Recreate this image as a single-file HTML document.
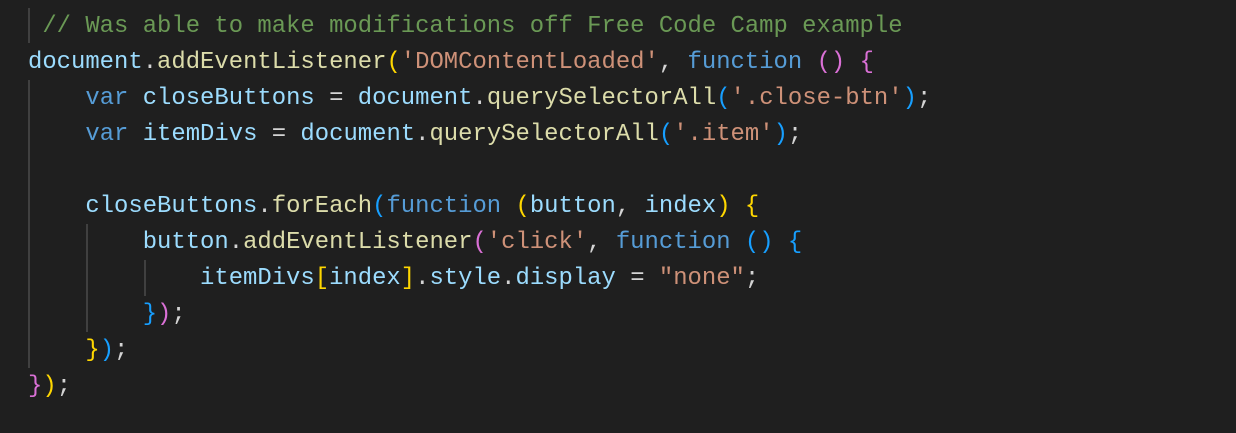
<!DOCTYPE html>
<html><head><style>
html,body{margin:0;padding:0;background:#1f1f1f;width:1236px;height:433px;overflow:hidden}
.c{position:absolute;left:28px;top:9px;font-family:"Liberation Mono",monospace;font-size:23.9px;line-height:36px;color:#9cdcfe;white-space:pre}
.g{position:absolute;width:2px;background:#404040}
.cm{color:#6a9955}.f{color:#dcdcaa}.k{color:#569cd6}.s{color:#ce9178}.p{color:#d4d4d4}
.y{color:#ffd700}.m{color:#da70d6}.b{color:#179fff}
</style></head><body>
<div class="g" style="left:28px;top:8px;height:35px"></div>
<div class="g" style="left:28px;top:80px;height:288px"></div>
<div class="g" style="left:86px;top:224px;height:108px"></div>
<div class="g" style="left:144px;top:260px;height:36px"></div>
<div class="c"><span class="cm"> // Was able to make modifications off Free Code Camp example</span>
document<span class="p">.</span><span class="f">addEventListener</span><span class="y">(</span><span class="s">'DOMContentLoaded'</span><span class="p">, </span><span class="k">function</span> <span class="m">()</span> <span class="m">{</span>
    <span class="k">var</span> closeButtons <span class="p">=</span> document<span class="p">.</span><span class="f">querySelectorAll</span><span class="b">(</span><span class="s">'.close-btn'</span><span class="b">)</span><span class="p">;</span>
    <span class="k">var</span> itemDivs <span class="p">=</span> document<span class="p">.</span><span class="f">querySelectorAll</span><span class="b">(</span><span class="s">'.item'</span><span class="b">)</span><span class="p">;</span>

    closeButtons<span class="p">.</span><span class="f">forEach</span><span class="b">(</span><span class="k">function</span> <span class="y">(</span>button<span class="p">,</span> index<span class="y">)</span> <span class="y">{</span>
        button<span class="p">.</span><span class="f">addEventListener</span><span class="m">(</span><span class="s">'click'</span><span class="p">, </span><span class="k">function</span> <span class="b">()</span> <span class="b">{</span>
            itemDivs<span class="y">[</span>index<span class="y">]</span><span class="p">.</span>style<span class="p">.</span>display <span class="p">=</span> <span class="s">"none"</span><span class="p">;</span>
        <span class="b">}</span><span class="m">)</span><span class="p">;</span>
    <span class="y">}</span><span class="b">)</span><span class="p">;</span>
<span class="m">}</span><span class="y">)</span><span class="p">;</span></div>
</body></html>
